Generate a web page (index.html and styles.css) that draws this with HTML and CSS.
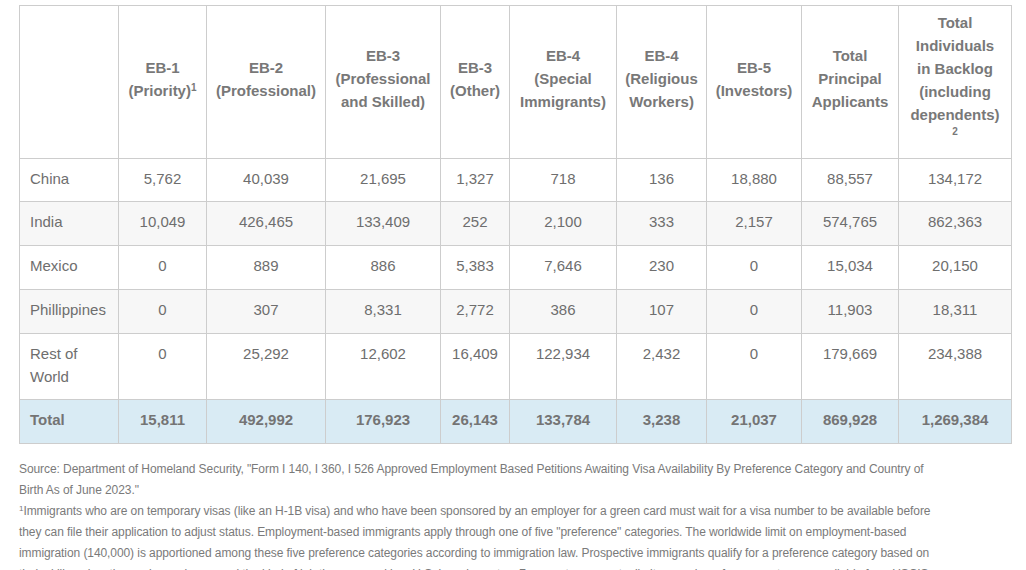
FILE: index.html
```html
<!DOCTYPE html>
<html lang="en">
<head>
<meta charset="utf-8">
<title>Employment-based backlog</title>
<link rel="stylesheet" href="styles.css">
</head>
<body>
<div class="wrap">
<table class="backlog">
  <colgroup>
    <col class="c1"><col class="c2"><col class="c3"><col class="c4"><col class="c5"><col class="c6"><col class="c7"><col class="c8"><col class="c9"><col class="c10">
  </colgroup>
  <thead>
    <tr>
      <th></th>
      <th>EB-1<br>(Priority)<sup>1</sup></th>
      <th>EB-2<br>(Professional)</th>
      <th>EB-3<br>(Professional<br>and Skilled)</th>
      <th>EB-3<br>(Other)</th>
      <th>EB-4<br>(Special<br>Immigrants)</th>
      <th>EB-4<br>(Religious<br>Workers)</th>
      <th>EB-5<br>(Investors)</th>
      <th>Total<br>Principal<br>Applicants</th>
      <th>Total<br>Individuals<br>in Backlog<br>(including<br>dependents)<span class="solo">2</span></th>
    </tr>
  </thead>
  <tbody>
    <tr class="first"><td>China</td><td>5,762</td><td>40,039</td><td>21,695</td><td>1,327</td><td>718</td><td>136</td><td>18,880</td><td>88,557</td><td>134,172</td></tr>
    <tr class="alt"><td>India</td><td>10,049</td><td>426,465</td><td>133,409</td><td>252</td><td>2,100</td><td>333</td><td>2,157</td><td>574,765</td><td>862,363</td></tr>
    <tr><td>Mexico</td><td>0</td><td>889</td><td>886</td><td>5,383</td><td>7,646</td><td>230</td><td>0</td><td>15,034</td><td>20,150</td></tr>
    <tr class="alt"><td>Phillippines</td><td>0</td><td>307</td><td>8,331</td><td>2,772</td><td>386</td><td>107</td><td>0</td><td>11,903</td><td>18,311</td></tr>
    <tr class="tall"><td>Rest of<br>World</td><td>0</td><td>25,292</td><td>12,602</td><td>16,409</td><td>122,934</td><td>2,432</td><td>0</td><td>179,669</td><td>234,388</td></tr>
    <tr class="total"><td>Total</td><td>15,811</td><td>492,992</td><td>176,923</td><td>26,143</td><td>133,784</td><td>3,238</td><td>21,037</td><td>869,928</td><td>1,269,384</td></tr>
  </tbody>
</table>
<div class="notes">
  <p>Source: Department of Homeland Security, "Form I 140, I 360, I 526 Approved Employment Based Petitions Awaiting Visa Availability By Preference Category and Country of Birth As of June 2023."</p>
  <p><sup>1</sup>Immigrants who are on temporary visas (like an H-1B visa) and who have been sponsored by an employer for a green card must wait for a visa number to be available before they can file their application to adjust status. Employment-based immigrants apply through one of five "preference" categories. The worldwide limit on employment-based immigration (140,000) is apportioned among these five preference categories according to immigration law. Prospective immigrants qualify for a preference category based on their skills, education and experience, and the kind of job they are seeking. U.S. law also sets a 7 percent per-country limit on each preference category, available from USCIS.</p>
</div>
</div>
</body>
</html>
```
FILE: styles.css
```css
html, body {
  margin: 0;
  padding: 0;
  background: #ffffff;
}
body {
  font-family: "Liberation Sans", Arial, sans-serif;
  color: #6e6e6e;
}
.wrap {
  padding: 5px 16px 0 19px;
}
.backlog {
  border-collapse: collapse;
  table-layout: fixed;
  width: 992px;
  font-size: 15px;
  line-height: 23px;
}
.c1 { width: 99px; }
.c2 { width: 88px; }
.c3 { width: 119px; }
.c4 { width: 115px; }
.c5 { width: 69px; }
.c6 { width: 107px; }
.c7 { width: 90px; }
.c8 { width: 95px; }
.c9 { width: 97px; }
.c10 { width: 113px; }
.backlog th,
.backlog td {
  border: 1px solid #cdcdcd;
  text-align: center;
}
.backlog th {
  font-weight: bold;
  color: #787878;
  padding: 5px 4px 12px;
  height: 135px;
  box-sizing: border-box;
  vertical-align: middle;
}
.backlog td {
  padding: 8px 8px 12px;
  vertical-align: top;
}
.backlog tr.first td {
  padding-bottom: 11px;
}
.backlog tr.tall td {
  padding-bottom: 11px;
}
.backlog td:first-child {
  text-align: left;
  padding-left: 10px;
}
.backlog sup {
  font-size: 10px;
  line-height: 0;
  vertical-align: 5px;
}
.backlog .solo {
  display: block;
  font-size: 10px;
  line-height: 12px;
  padding-bottom: 8px;
}
.backlog tr.alt td {
  background: #f7f7f7;
}
.backlog tr.total td {
  background: #d9ebf4;
  font-weight: bold;
  color: #747474;
}
.notes {
  margin-top: 15px;
  font-size: 12px;
  line-height: 21px;
  letter-spacing: -0.08px;
  color: #7a7a7a;
  width: 930px;
}
.notes p {
  margin: 0;
}
.notes sup {
  font-size: 8px;
  line-height: 0;
  vertical-align: 4px;
}
```
